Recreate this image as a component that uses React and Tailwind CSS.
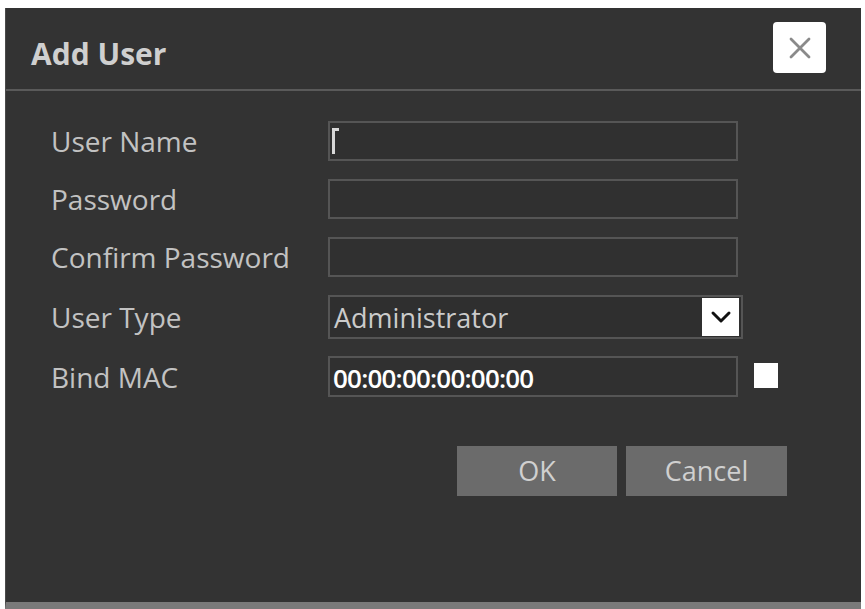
import React from "react";

const font = { fontFamily: '"Open Sans", "Noto Sans", sans-serif' };

function Field({ label, className, children }) {
  return (
    <div className={"flex items-center " + className}>
      <div className="w-[277px] text-[28px] text-[#c2c2c2] leading-none">{label}</div>
      {children}
    </div>
  );
}

export default function App() {
  return (
    <div className="w-[865px] h-[609px] bg-white pt-[8px] pl-[5px] pr-[4px] overflow-hidden" style={font}>
      <div className="flex flex-col h-[601px] bg-[#333333] border-l border-[#4a4a4a] border-b-[7px] border-b-[#7a7a7a]">
        <div className="flex items-center justify-between h-[83px] pl-[25px] pr-[35px] border-b-2 border-[#5a5a5a]">
          <div className="text-[30px] font-bold text-[#cfcfcf] leading-none pt-[11px]">Add User</div>
          <div className="w-[53px] h-[51px] bg-white rounded-[4px] flex items-center justify-center mt-[-2px]">
            <svg width="22" height="22" viewBox="0 0 22 22">
              <path d="M2 2 L20 20 M20 2 L2 20" stroke="#8a8a8a" strokeWidth="2.8" strokeLinecap="round" />
            </svg>
          </div>
        </div>
        <div className="flex flex-col pl-[45px] pt-[30px]">
          <Field label="User Name" className="h-[40px]">
            <div className="w-[410px] h-[40px] border-2 border-[#555555] bg-[#303030] flex items-center pl-[2px]">
              <div className="w-[3px] h-[26px] bg-[#d8d8d8] relative">
                <div className="absolute top-0 left-0 w-[7px] h-[3px] bg-[#d8d8d8]" />
              </div>
            </div>
          </Field>
          <Field label="Password" className="h-[40px] mt-[18px]">
            <div className="w-[410px] h-[40px] border-2 border-[#555555] bg-[#303030]" />
          </Field>
          <Field label="Confirm Password" className="h-[40px] mt-[18px]">
            <div className="w-[410px] h-[40px] border-2 border-[#555555] bg-[#303030]" />
          </Field>
          <Field label="User Type" className="h-[44px] mt-[18px]">
            <div className="w-[415px] h-[44px] border-2 border-[#555555] bg-[#2f2f2f] flex items-center justify-between pl-[4px] pr-[2px]">
              <span className="text-[27px] text-[#cbcbcb] leading-none">Administrator</span>
              <div className="w-[37px] h-[38px] bg-white flex items-center justify-center">
                <svg width="22" height="14" viewBox="0 0 22 14">
                  <path d="M3 3 L11 11 L19 3" stroke="#111" strokeWidth="3" fill="none" strokeLinecap="round" strokeLinejoin="round" />
                </svg>
              </div>
            </div>
          </Field>
          <Field label="Bind MAC" className="h-[41px] mt-[17px]">
            <div className="w-[410px] h-[41px] border-2 border-[#555555] bg-[#303030] flex items-center pl-[3px] pt-[3px]">
              <span className="text-[26px] text-white font-semibold tracking-[-0.8px] leading-none">00:00:00:00:00:00</span>
            </div>
            <div className="w-[24px] h-[25px] bg-white ml-[16px] mt-[-2px]" />
          </Field>
        </div>
        <div className="flex gap-[9px] pl-[451px] pt-[49px]">
          <div className="w-[160px] h-[50px] bg-[#6b6b6b] flex items-center justify-center text-[27px] text-[#d0d0d0]">OK</div>
          <div className="w-[161px] h-[50px] bg-[#6b6b6b] flex items-center justify-center text-[27px] text-[#d0d0d0]">Cancel</div>
        </div>
      </div>
    </div>
  );
}
